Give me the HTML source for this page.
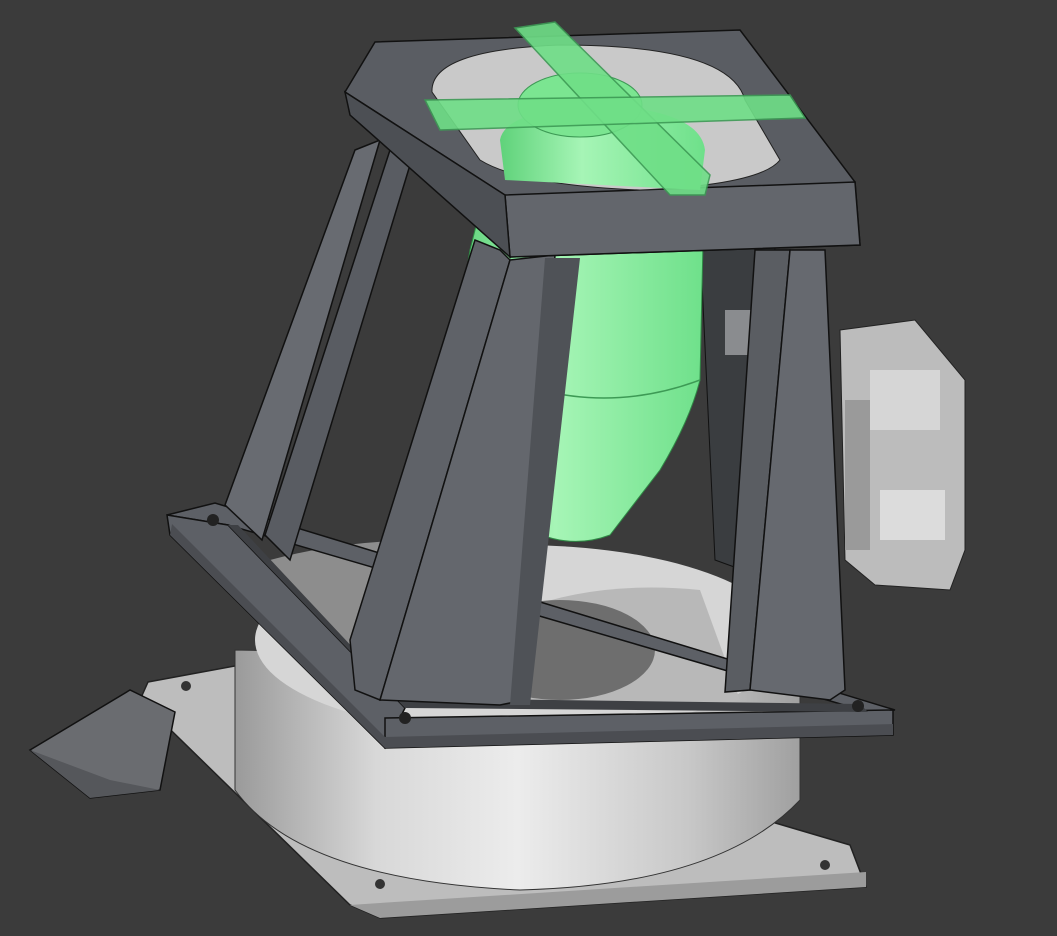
<!DOCTYPE html>
<html><head><meta charset="utf-8"><style>
html,body{margin:0;padding:0;background:#3b3b3b;}
svg{display:block}
</style></head><body>
<svg width="1057" height="936" viewBox="0 0 1057 936" xmlns="http://www.w3.org/2000/svg">
<defs>
<linearGradient id="cyl" x1="0" x2="1" y1="0" y2="0">
<stop offset="0" stop-color="#9a9a9a"/><stop offset="0.25" stop-color="#d8d8d8"/><stop offset="0.5" stop-color="#ececec"/><stop offset="0.8" stop-color="#c8c8c8"/><stop offset="1" stop-color="#a0a0a0"/>
</linearGradient>
<linearGradient id="grn" x1="0" x2="1" y1="0" y2="0">
<stop offset="0" stop-color="#5fd27a"/><stop offset="0.4" stop-color="#a6f5b6"/><stop offset="1" stop-color="#6ee08a"/>
</linearGradient>
</defs>
<rect width="1057" height="936" fill="#3b3b3b"/>
<!-- bottom plate -->
<polygon points="148,682 240,665 850,845 866,887 380,918 350,905 140,700" fill="#bdbdbd" stroke="#222" stroke-width="1.5"/>
<polygon points="350,905 380,918 866,887 866,872 380,903" fill="#9c9c9c"/>
<circle cx="186" cy="686" r="5" fill="#333"/><circle cx="380" cy="884" r="5" fill="#333"/><circle cx="825" cy="865" r="5" fill="#333"/>
<!-- left bracket -->
<polygon points="30,750 130,690 175,712 160,790 90,798" fill="#6a6c70" stroke="#111" stroke-width="1.5"/>
<polygon points="30,750 90,798 160,790 110,780" fill="#55575b"/>
<!-- cylinder -->
<path d="M235,650 L235,790 Q300,880 520,890 Q720,885 800,800 L800,660 Z" fill="url(#cyl)" stroke="#333" stroke-width="1"/>
<!-- fan interior -->
<ellipse cx="520" cy="640" rx="265" ry="95" fill="#d6d6d6"/>
<path d="M270,560 Q380,530 520,545 L520,700 Q400,710 280,640Z" fill="#8d8d8d"/>
<path d="M520,610 Q600,580 700,590 L740,700 Q620,715 520,700Z" fill="#b8b8b8"/>
<ellipse cx="560" cy="650" rx="95" ry="50" fill="#6e6e6e"/>
<!-- base frame (ring) -->
<polygon points="167,515 215,503 895,710 868,712 228,525" fill="#5d6066" stroke="#111" stroke-width="1.5"/>
<polygon points="167,515 228,525 405,708 385,748 170,535" fill="#5d6066" stroke="#111" stroke-width="1.5"/>
<polygon points="385,718 893,710 893,735 385,748" fill="#5d6066" stroke="#111" stroke-width="1.5"/>
<polygon points="170,535 385,748 893,735 893,724 385,737 172,524" fill="#4b4d52"/>
<polygon points="228,525 405,708 868,712 860,704 400,698 238,525" fill="#3e4044"/>
<circle cx="213" cy="520" r="6" fill="#222"/><circle cx="405" cy="718" r="6" fill="#222"/><circle cx="858" cy="706" r="6" fill="#222"/>
<!-- right electronics -->
<polygon points="840,330 915,320 965,380 965,550 950,590 875,585 845,560" fill="#bcbcbc" stroke="#222" stroke-width="1"/>
<rect x="870" y="370" width="70" height="60" fill="#d6d6d6"/>
<rect x="880" y="490" width="65" height="50" fill="#dcdcdc"/>
<rect x="845" y="400" width="25" height="150" fill="#9a9a9a"/>
<!-- PCB -->
<polygon points="700,240 775,240 770,580 715,560" fill="#3a3d40" stroke="#111"/>
<rect x="725" y="310" width="40" height="45" fill="#8a8c8f"/>
<!-- green body -->
<path d="M500,130 Q505,105 600,100 Q700,105 705,150 L700,380 Q690,420 660,470 L610,535 Q570,550 530,530 L520,440 Q470,400 455,340 L470,250 Z" fill="url(#grn)" stroke="#2f8a45" stroke-width="1"/>
<path d="M540,390 Q620,410 700,380" fill="none" stroke="#3d9a55" stroke-width="1.5"/>
<!-- pillars -->
<polygon points="265,535 390,150 410,165 290,560" fill="#595c62" stroke="#111" stroke-width="1.5"/>
<polygon points="225,505 355,150 380,140 262,540" fill="#686b71" stroke="#111" stroke-width="1.5"/>
<polygon points="350,640 475,240 500,250 510,260 380,700 355,690" fill="#5f6268" stroke="#111" stroke-width="1.5"/>
<polygon points="510,260 555,255 525,700 500,705 380,700" fill="#64676d" stroke="#111" stroke-width="1.5"/>
<polygon points="545,258 580,258 530,705 510,705" fill="#4f5257"/>
<polygon points="755,250 790,250 750,690 725,692" fill="#5a5d62" stroke="#111" stroke-width="1.5"/>
<polygon points="790,250 825,250 845,690 830,700 750,690" fill="#66696f" stroke="#111" stroke-width="1.5"/>
<!-- top frame -->
<polygon points="345,92 375,42 740,30 855,182 860,245 510,257 505,195" fill="#5a5d63" stroke="#111" stroke-width="1.5"/>
<polygon points="505,195 510,257 860,245 855,182" fill="#63666c" stroke="#111" stroke-width="1.5"/>
<polygon points="345,92 505,195 510,257 350,115" fill="#4c4f54" stroke="#111" stroke-width="1.5"/>
<path d="M432,92 Q430,50 560,45 Q730,45 745,100 L780,160 Q760,185 640,190 Q520,185 480,160Z" fill="#c9c9c9" stroke="#222"/>
<path d="M500,140 Q505,110 600,105 Q700,110 705,150 L700,190 L505,180Z" fill="url(#grn)"/>
<!-- green cross -->
<ellipse cx="580" cy="105" rx="62" ry="32" fill="#7be591" stroke="#3d9a55"/>
<polygon points="515,28 555,22 710,175 705,195 670,195" fill="#6fdf87" stroke="#3d9a55" stroke-width="1.5" opacity="0.9"/>
<polygon points="425,100 790,95 805,118 440,130" fill="#6fdf87" stroke="#3d9a55" stroke-width="1.5" opacity="0.9"/>
</svg>
</body></html>
